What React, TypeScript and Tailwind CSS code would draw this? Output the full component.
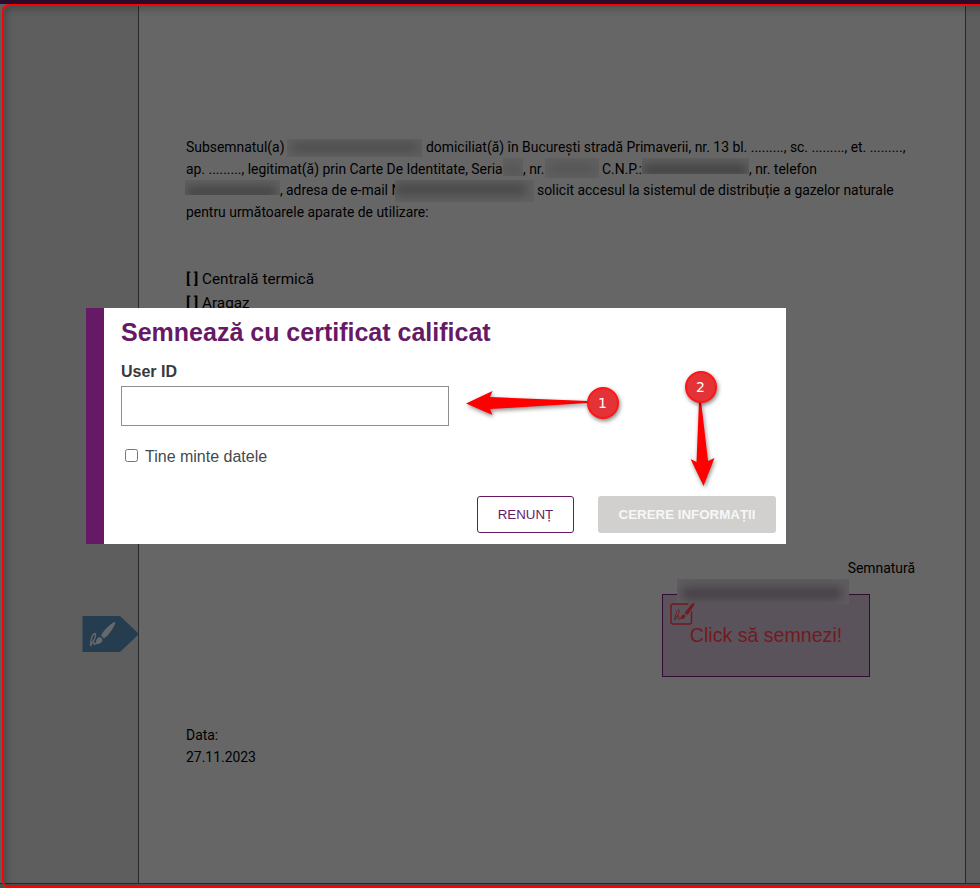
import clsx from "clsx"

const Smudge = ({ className, ink }: { className: string; ink: string }) => (
  <span className={clsx("block shrink-0 overflow-hidden bg-[#606060]", className)}>
    <span className={clsx("block rounded-full blur-[5px]", ink)} />
  </span>
)

const Statement = () => (
  <div className="flex flex-col text-[13.91px] leading-[21.6px] whitespace-pre">
    <div className="flex h-[21.6px]">
      <span className="w-[101px]">Subsemnatul(a)</span>
      <Smudge className="mt-0.5 h-[18px] w-[135px]" ink="mt-1 ml-1 h-[9px] w-[128px] bg-[#4c4c4c]" />
      <span className="ml-1">domiciliat(ă) în București stradă Primaverii, nr. 13 bl. ........., sc. ........., et. .........,</span>
    </div>
    <div className="flex h-[21.6px]">
      <span className="w-[317px]">ap. ........., legitimat(ă) prin Carte De Identitate, Seria</span>
      <Smudge className="-mt-px h-[18px] w-[20px]" ink="mt-2 h-[9px] w-[19px] bg-[#545454]" />
      <span className="w-[22px]">, nr.</span>
      <Smudge className="-mt-px h-5 w-[54px]" ink="mt-1.5 ml-1 h-[9px] w-[46px] bg-[#545454]" />
      <span className="ml-[3px] w-[40px]">C.N.P.:</span>
      <Smudge className="-mt-px h-[16px] w-[107px]" ink="mt-1.5 h-[12px] w-[106px] bg-[#444444]" />
      <span>, nr. telefon</span>
    </div>
    <div className="flex h-[21.6px]">
      <Smudge className="-ml-px h-[15px] w-[95px]" ink="mt-1.5 h-[12px] w-[92px] bg-[#464646]" />
      <span className="w-[6px]">,</span>
      <span className="w-[109px]">adresa de e-mail N</span>
      <Smudge className="mt-0 h-[22px] w-[139px]" ink="mt-1 h-[11px] w-[132px] bg-[#484848]" />
      <span className="ml-[3px]">solicit accesul la sistemul de distribuție a gazelor naturale</span>
    </div>
    <div>pentru următoarele aparate de utilizare:</div>
  </div>
)

const SignatureBox = () => (
  <div className="relative h-[83px] w-[208px] border border-[#310b30] bg-[#5b535b]">
    <div className="absolute -top-[16px] left-[14px] h-[25px] w-[172px] overflow-hidden bg-[#5f5c5f]">
      <div className="mt-2 ml-1 h-[13px] w-[162px] rounded-full bg-[#464147] blur-[5px]" />
    </div>
    <svg
      className="absolute top-[7px] left-[6px]"
      width="27"
      height="26"
      viewBox="0 0 27 26"
      fill="none"
      stroke="#741a1e"
      strokeLinecap="round"
      strokeLinejoin="round"
    >
      <path d="M19 2H4Q2 2 2 4V20Q2 22 4 22H20.500Q22.500 22 22.500 20V10" strokeWidth="1.500" />
      <path d="M5 18C7 17 11.500 10 10 7.500C8 7 6 14 6 18C7 15 9 13 10 14C10 15 8 18 10 17L12 16" strokeWidth="0.900" />
      <path d="M12.500 16.500C12.500 13.500 14 12.500 15.500 13C17 14.500 15 16.500 12.500 16.500Z" fill="#741a1e" />
      <path d="M16.500 11L23 2.500L25 1.500L24 4L18.500 12Z" fill="#741a1e" strokeWidth="1.300" />
    </svg>
    <div className="pt-[27px] text-center font-['Liberation_Sans'] text-[19.6px] leading-[26px] text-[#741a1e]">
      Click să semnezi!
    </div>
  </div>
)

const SignFlag = () => (
  <svg className="absolute top-[616px] left-[82px]" width="57" height="36" viewBox="0 0 57 36">
    <path d="M0.500 0H38L57 18L38 36H0.500Z" fill="#263d50" />
    <g fill="#65696d">
      <path d="M19 19.500C21 15 29 7 32.500 6Q34 6 33 8C31 13 26 20 22 22.500Z" />
      <path d="M13.500 28C14 24 15.500 21 18 21Q20.500 22 20.500 24.500C19 28 16 28.500 13.500 28Z" />
    </g>
    <path
      d="M8 29.500C11 27 15 19 13 17.500C10 18 8 26 9 29C10 26 12.500 25 12 28L14 28"
      fill="none"
      stroke="#65696d"
      strokeWidth="1.300"
    />
  </svg>
)

const Marker = ({ label, className }: { label: string; className: string }) => (
  <div
    className={clsx(
      "absolute flex size-8 items-center justify-center rounded-full border-2 border-[#ff1517] bg-[#e43336] pr-px pb-px font-['DejaVu_Sans'] text-[14px] leading-none text-white shadow-[1px_2px_4px_rgba(0,0,0,0.5)]",
      className,
    )}
  >
    {label}
  </div>
)

const Modal = () => (
  <div className="absolute top-[308px] left-[86px] flex h-[236px] w-[700px] flex-col border-l-[18px] border-[#661a66] bg-white pr-[10px] pl-[17px] font-['Liberation_Sans',sans-serif] text-[#343a40]">
    <h1 className="mt-2 text-[25px] leading-8 font-bold text-[#661a66]">
      Semnează cu certificat calificat
    </h1>
    <label className="mt-[14px] text-[16px] leading-5 font-bold">User ID</label>
    <input className="mt-1 h-10 w-[328px] border border-[#8e8e8e] bg-white" />
    <label className="mt-5 flex h-5 items-center gap-[7px] pl-1 text-[16px] text-[#444a50]">
      <input type="checkbox" className="mb-0.5 size-[13px]" />
      <span className="pt-px">Tine minte datele</span>
    </label>
    <div className="mt-[30px] flex justify-end gap-6 text-[13.33px]">
      <button className="h-[37px] w-[97px] rounded-[3px] border border-[#661a66] text-[#661a66]">RENUNȚ</button>
      <button className="h-[37px] w-[178px] rounded-[3px] bg-[#d1d0cf] font-bold text-[#f7f7f7]">
        CERERE INFORMAȚII
      </button>
    </div>
  </div>
)

const Arrows = () => (
  <svg
    className="absolute top-[360px] left-[450px] drop-shadow-[1px_2px_2px_rgba(0,0,0,0.45)]"
    width="300"
    height="140"
    viewBox="0 0 300 140"
    fill="#ff0000"
  >
    <path d="M16 43.500L42.500 31L40 37L138 41V43L40 49L42.500 55Z" />
    <path d="M249 41H251L258 101L264.500 98L253.500 126L240.500 99L246.500 102Z" />
  </svg>
)

const App = () => {
  return (
    <div className="relative flex h-[888px] w-[980px] flex-col overflow-hidden bg-[#4f4f4f] font-['Roboto',sans-serif] text-black">
      <div className="h-1 shrink-0 bg-[#2b0a2b]" />
      <div className="flex h-[880px] shrink-0 border-b border-[#292929] bg-[#5e5e5e]">
        <main className="ml-[138px] flex w-[828px] flex-col border-x border-[#292929] bg-[#666666] pt-[133px] pl-[47px]">
          <Statement />
          <div className="mt-[44px] text-[15.25px] leading-6">
            <div><b className="font-bold">[ ]</b> Centrală termică</div>
            <div><b className="font-bold">[ ]</b> Aragaz</div>
          </div>
          <div className="mt-[242px] mr-[50px] text-right text-[13.93px] leading-[22px]">Semnatură</div>
          <div className="mt-[15px] ml-[476px]">
            <SignatureBox />
          </div>
          <div className="mt-[48px] text-[13.93px] leading-[21.6px]">
            <div>Data:</div>
            <div>27.11.2023</div>
          </div>
        </main>
      </div>
      <SignFlag />
      <div className="pointer-events-none absolute top-[3.5px] left-[1.5px] h-[884px] w-[990px] rounded-[7px] border-2 border-[#ff0000] shadow-[inset_2px_3px_9px_rgba(0,0,0,0.25)]" />
      <Modal />
      <Arrows />
      <Marker label="1" className="top-[387px] left-[587px]" />
      <Marker label="2" className="top-[371px] left-[685px]" />
    </div>
  )
}

export default App
